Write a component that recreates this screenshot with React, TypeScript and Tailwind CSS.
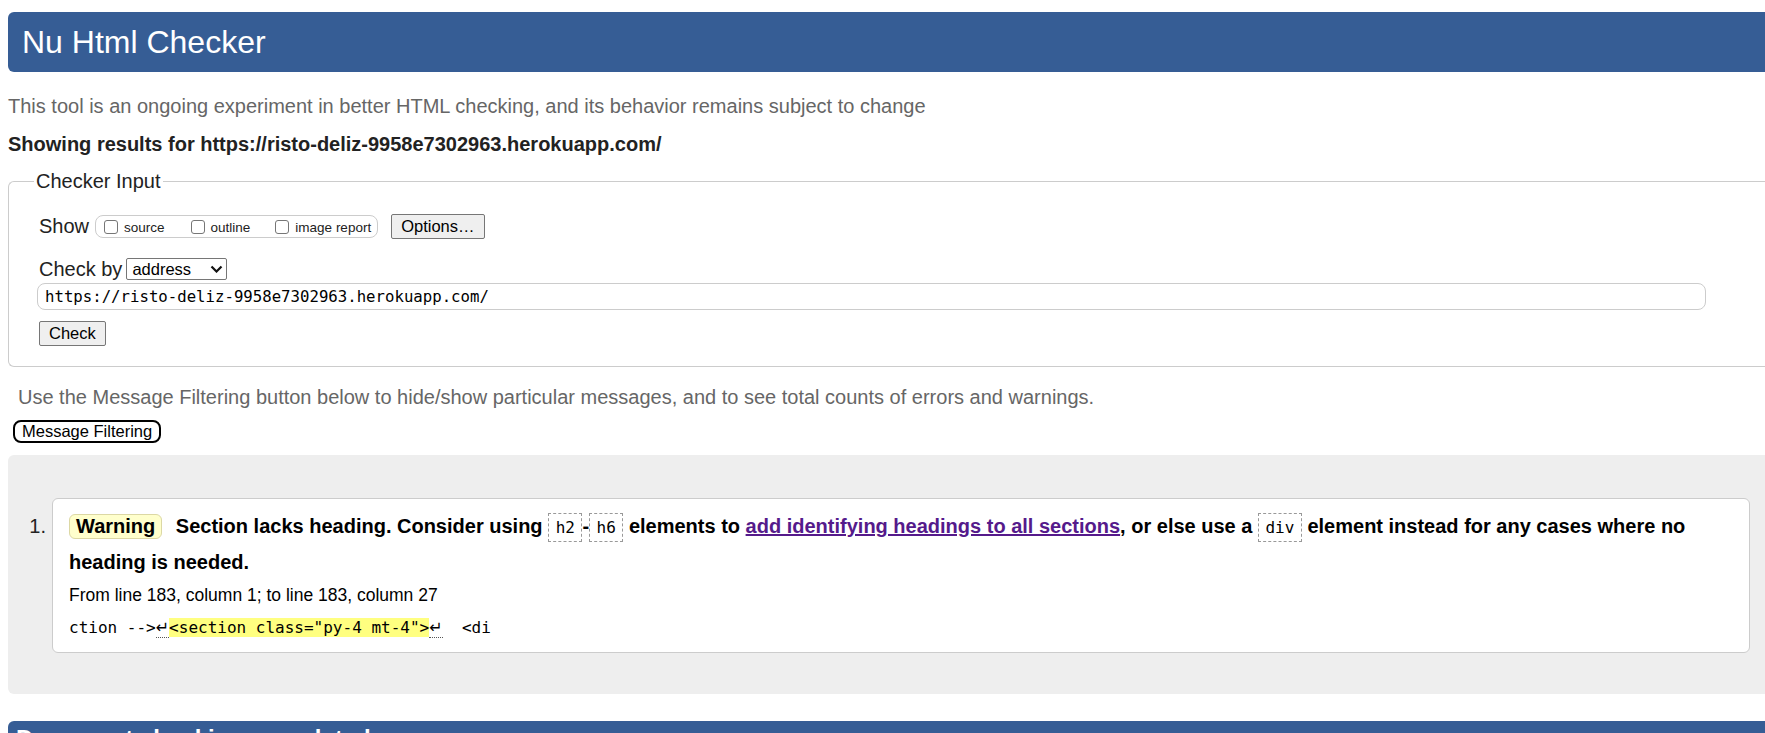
function Checkbox({ className = "" }: { className?: string }) {
  return (
    <span
      className={`inline-block h-[14px] w-[14px] shrink-0 rounded-[3px] border border-[#767676] bg-white ${className}`}
    />
  );
}

function Code({ children }: { children: React.ReactNode }) {
  return (
    <code className="border border-dashed border-[#999] px-[6.5px] py-[4px] font-['DejaVu_Sans_Mono',monospace] text-[16px] font-normal">
      {children}
    </code>
  );
}

function ReturnMark() {
  return (
    <span className="border-b border-dotted border-[#555] font-['DejaVu_Sans',sans-serif]">↵</span>
  );
}

export default function App() {
  return (
    <div className="h-screen overflow-hidden bg-white font-['Liberation_Sans',Arial,sans-serif] text-[20px] text-[#222]">
      <header className="ml-[8px] mt-[12px] flex h-[60px] items-center rounded-l-[6px] bg-[#365d95] pl-[14px]">
        <h1 className="text-[32px] leading-[37px] text-white">Nu Html Checker</h1>
      </header>

      <p className="ml-[8px] mt-[22px] leading-[24px] text-[#666]">
        This tool is an ongoing experiment in better HTML checking, and its behavior remains subject to change
      </p>
      <p className="ml-[8px] mt-[14px] font-bold leading-[24px]">
        Showing results for https://risto-deliz-9958e7302963.herokuapp.com/
      </p>

      <fieldset className="ml-[8px] mt-[14px] rounded-l-[6px] border border-r-0 border-[#ccc]">
        <legend className="ml-[25px] px-[2px] leading-[23px]">Checker Input</legend>
        <div className="pb-[20px] pl-[30px]">
          <div className="mt-[21px] flex h-[25px] items-center">
            <span className="leading-[23px]">Show</span>
            <div className="ml-[6px] flex h-[23px] items-center rounded-[8px] border border-[#ccc] pl-[8px] pr-[6px] text-[13.5px]">
              <Checkbox />
              <span className="ml-[6px] pt-[3px]">source</span>
              <Checkbox className="ml-[26px]" />
              <span className="ml-[6px] pt-[3px]">outline</span>
              <Checkbox className="ml-[25px]" />
              <span className="ml-[6px] pt-[3px]">image report</span>
            </div>
            <button className="ml-[13px] h-[25px] rounded-[2px] border border-[#767676] bg-[#efefef] px-[9px] text-[16.5px] leading-[19px] text-black">
              Options…
            </button>
          </div>

          <div className="mt-[19px] flex h-[22px] items-center">
            <span className="leading-[23px]">Check by</span>
            <div className="ml-[4px] flex h-[22px] w-[101px] items-center justify-between rounded-[2px] border border-[#767676] bg-white pl-[5px] pr-[3px] text-[16.5px] text-black">
              <span className="leading-[19px]">address</span>
              <svg width="13" height="8" viewBox="0 0 13 8" fill="none">
                <path d="M1.5 1.5 6.5 6.5 11.5 1.5" stroke="#111" strokeWidth="2.2" />
              </svg>
            </div>
          </div>

          <div className="ml-[-2px] mt-[3px] flex h-[27px] w-[1669px] items-center rounded-[8px] border border-[#ccc] pl-[7px] font-['DejaVu_Sans_Mono',monospace] text-[15.7px] text-black">
            https://risto-deliz-9958e7302963.herokuapp.com/
          </div>

          <button className="mt-[11px] block h-[25px] rounded-[2px] border border-[#767676] bg-[#efefef] px-[9px] text-[16.5px] leading-[19px] text-black">
            Check
          </button>
        </div>
      </fieldset>

      <p className="ml-[18px] mt-[18px] leading-[24px] text-[#666]">
        Use the Message Filtering button below to hide/show particular messages, and to see total counts of errors and warnings.
      </p>
      <button className="ml-[13px] mt-[11px] block h-[23px] rounded-[8px] border-2 border-black bg-white px-[7px] text-[16.5px] leading-[19px] text-black">
        Message Filtering
      </button>

      <div className="ml-[8px] mt-[12px] rounded-l-[6px] bg-[#eee] pb-[41px] pt-[43px]">
        <ol>
          <li className="flex items-start">
            <span className="mt-[11px] w-[38px] text-right leading-[35px]">1.</span>
            <div className="ml-[6px] w-[1698px] rounded-[6px] border border-[#ccc] bg-white px-[16px] pb-[12px] pt-[10px] text-black">
              <p className="font-bold leading-[35px]">
                <span className="mr-[8px] inline-block rounded-[6px] border border-[#dcd8a4] bg-[#ffffcc] px-[6px] leading-[23px]">
                  Warning
                </span>{" "}
                Section lacks heading. Consider using <Code>h2</Code>-<Code>h6</Code> elements to{" "}
                <a href="#" className="text-[#551a8b] underline">
                  add identifying headings to all sections
                </a>
                , or else use a <Code>div</Code> element instead for any cases where no heading is needed.
              </p>
              <p className="mt-[3px] text-[17.5px] leading-[24px]">
                From line 183, column 1; to line 183, column 27
              </p>
              <p className="mt-[9px] whitespace-pre font-['DejaVu_Sans_Mono',monospace] text-[16px] leading-[24px]">
                ction --&gt;
                <ReturnMark />
                <mark className="bg-[#ffff80] text-black">&lt;section class="py-4 mt-4"&gt;</mark>
                <ReturnMark />
                {"  <di"}
              </p>
            </div>
          </li>
        </ol>
      </div>

      <div className="ml-[8px] mt-[27px] h-[60px] rounded-tl-[6px] bg-[#365d95] pl-[8px] pt-[4px]">
        <h2 className="text-[24px] font-bold leading-[28px] text-white">Document checking completed.</h2>
      </div>
    </div>
  );
}
